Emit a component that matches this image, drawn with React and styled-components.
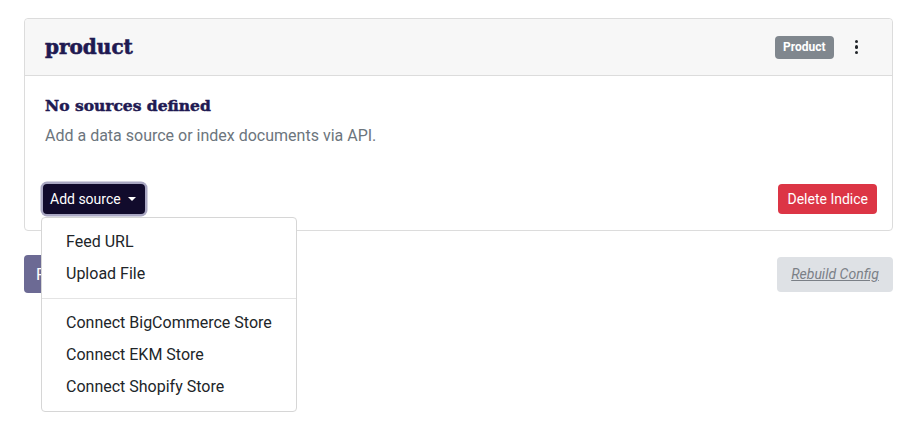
import React from 'react'
import styled, { createGlobalStyle } from 'styled-components'

const GlobalStyle = createGlobalStyle`
  body {
    margin: 0;
    background: #ffffff;
    font-family: Roboto, "Liberation Sans", sans-serif;
  }
`;

const Page = styled.div`
  min-height: 437px;
  box-sizing: border-box;
  padding: 18px 20px 0 24px;
`;

const Card = styled.div`
  border: 1px solid #dcdcdc;
  border-radius: 4px;
  background: #ffffff;
`;

const CardHeader = styled.div`
  height: 56px;
  display: flex;
  align-items: center;
  padding: 0 28px 0 20px;
  background: #f7f7f7;
  border-bottom: 1px solid #dcdcdc;
  border-radius: 4px 4px 0 0;
`;

const IndexName = styled.h2`
  flex: 1;
  margin: 0;
  font-family: "DejaVu Serif", serif;
  font-weight: 900;
  font-size: 20px;
  color: #1f1a52;
  -webkit-text-stroke: 0.6px #1f1a52;
`;

const Badge = styled.span`
  background: #80878e;
  color: #ffffff;
  font-size: 12px;
  font-weight: 700;
  padding: 4px 8px;
  border-radius: 4px;
  line-height: 15px;
`;

const Kebab = styled.button`
  border: 0;
  background: transparent;
  margin-left: 15px;
  padding: 4px 6px;
  display: flex;
  flex-direction: column;
  gap: 2px;
  cursor: pointer;
  span {
    width: 3.5px;
    height: 3.5px;
    border-radius: 50%;
    background: #212529;
  }
`;

const CardBody = styled.div`
  padding: 20px 15px 16px 18px;
`;

const EmptyTitle = styled.h3`
  margin: 0 0 0 2px;
  font-family: "DejaVu Serif", serif;
  font-weight: 900;
  font-size: 15.5px;
  line-height: 20px;
  color: #1f1a52;
  -webkit-text-stroke: 0.5px #1f1a52;
`;

const EmptyText = styled.p`
  margin: 8px 0 0 2px;
  font-size: 16px;
  line-height: 24px;
  color: #6c757d;
`;

const Actions = styled.div`
  margin-top: 36px;
  display: flex;
  justify-content: space-between;
  align-items: center;
`;

const DropdownWrap = styled.div`
  position: relative;
`;

const Button = styled.button`
  height: 30px;
  padding: ${({ variant }) => (variant === 'danger' ? '0 9px' : '0 9px 0 7px')};
  border: 0;
  border-radius: 4px;
  font-family: Roboto, "Liberation Sans", sans-serif;
  font-size: 14px;
  color: #ffffff;
  background: ${({ variant }) => (variant === 'danger' ? '#dc3545' : '#110b2c')};
  box-shadow: ${({ focused }) => (focused ? '0 0 0 2.5px #a9a7c2' : 'none')};
  display: flex;
  align-items: center;
  gap: 7px;
  cursor: pointer;
`;

const Caret = styled.span`
  width: 0;
  height: 0;
  border-left: 4px solid transparent;
  border-right: 4px solid transparent;
  border-top: 4px solid #ffffff;
`;

const Menu = styled.div`
  position: absolute;
  top: 33px;
  left: -2px;
  width: 254px;
  padding: 8px 0;
  background: #ffffff;
  border: 1px solid #d6d6d6;
  border-radius: 4px;
  z-index: 2;
`;

const MenuItem = styled.div`
  padding: 4px 24px;
  font-size: 16px;
  line-height: 24px;
  color: #212529;
  cursor: pointer;
`;

const MenuDivider = styled.hr`
  margin: 8px 0;
  border: 0;
  border-top: 1px solid #e4e4e4;
`;

const Footer = styled.div`
  margin-top: 24px;
  display: flex;
  justify-content: space-between;
  align-items: center;
`;

const PrimaryButton = styled.button`
  height: 38px;
  padding: 0 12px;
  border: 0;
  border-radius: 4px;
  background: #6c6a94;
  color: #ffffff;
  font-family: Roboto, "Liberation Sans", sans-serif;
  font-size: 16px;
`;

const GhostButton = styled.button`
  height: 35px;
  width: 116px;
  border: 0;
  border-radius: 4px;
  background: #dee1e5;
  color: #7b8087;
  font-family: Roboto, "Liberation Sans", sans-serif;
  font-size: 14px;
  font-style: italic;
  text-decoration: underline;
`;

const sources = ['Feed URL', 'Upload File'];
const stores = ['Connect BigCommerce Store', 'Connect EKM Store', 'Connect Shopify Store'];

export default function App() {
  return (
    <Page>
      <GlobalStyle />
      <Card>
        <CardHeader>
          <IndexName>product</IndexName>
          <Badge>Product</Badge>
          <Kebab aria-label="More">
            <span />
            <span />
            <span />
          </Kebab>
        </CardHeader>
        <CardBody>
          <EmptyTitle>No sources defined</EmptyTitle>
          <EmptyText>Add a data source or index documents via API.</EmptyText>
          <Actions>
            <DropdownWrap>
              <Button focused>
                Add source <Caret />
              </Button>
              <Menu>
                {sources.map(s => <MenuItem key={s}>{s}</MenuItem>)}
                <MenuDivider />
                {stores.map(s => <MenuItem key={s}>{s}</MenuItem>)}
              </Menu>
            </DropdownWrap>
            <Button variant="danger">Delete Indice</Button>
          </Actions>
        </CardBody>
      </Card>
      <Footer>
        <PrimaryButton>Reindex</PrimaryButton>
        <GhostButton disabled>Rebuild Config</GhostButton>
      </Footer>
    </Page>
  )
}
